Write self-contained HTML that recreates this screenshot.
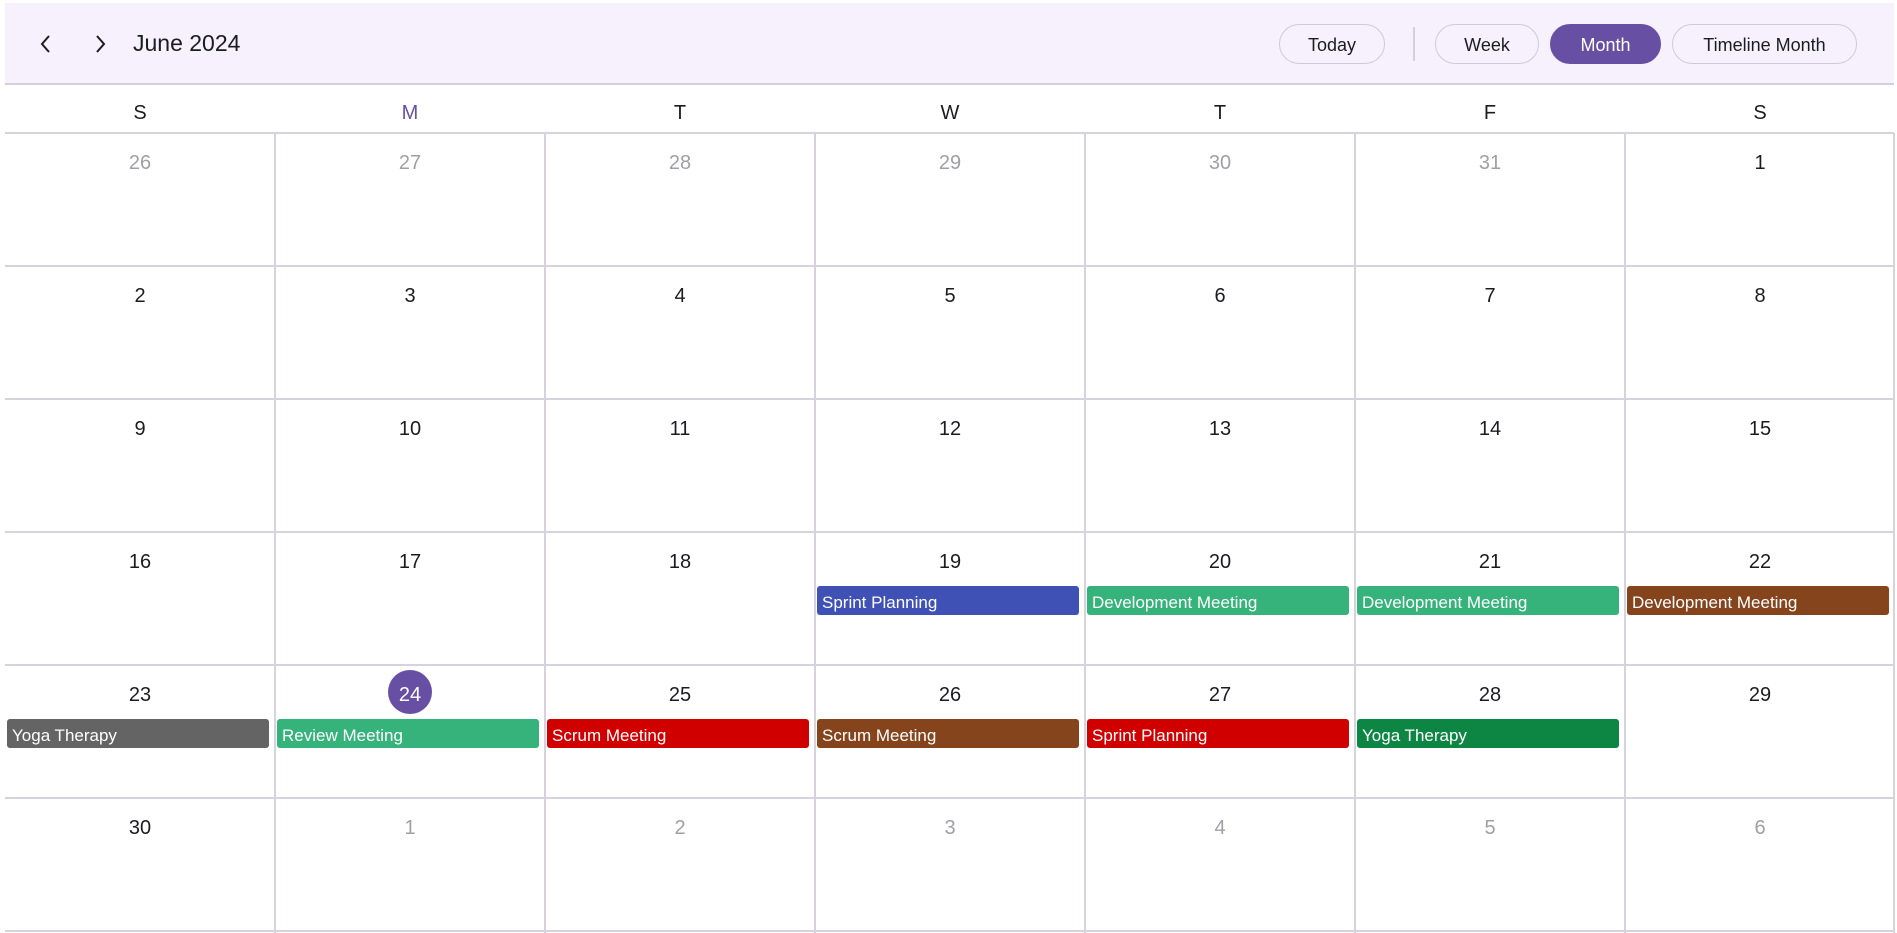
<!DOCTYPE html>
<html><head><meta charset="utf-8"><style>
*{box-sizing:border-box;margin:0;padding:0}
body{width:1897px;height:933px;background:#fff;font-family:"Liberation Sans",sans-serif;position:relative;overflow:hidden;color:#1c1b1f}
.hdr{position:absolute;left:5px;top:3px;width:1889px;height:82px;background:#f6f1fc;border-bottom:2px solid #d3d0da}
.t{position:absolute;white-space:nowrap}
.btn{position:absolute;top:24px;height:40px;border:1.5px solid #cfcad6;border-radius:20px;font-size:18px;display:flex;align-items:center;justify-content:center;color:#1c1b1f;padding-top:2px}
.dn{position:absolute;top:102px;width:270px;text-align:center;font-size:20px}
.hl{position:absolute;left:5px;width:1889px;height:2px;background:#d6d3de}
.vl{position:absolute;top:133px;width:2px;height:800px;background:#d6d3de}
.d{position:absolute;width:270px;text-align:center;font-size:20px;color:#1c1b1f;margin-top:3px}
.g{color:#a09ea6}
.ev{position:absolute;height:29px;border-radius:3px;color:#fff;font-size:17px;line-height:33px;padding-left:5px;white-space:nowrap;overflow:hidden}
</style></head><body>
<div class="hdr"></div>
<svg class="t" style="left:38px;top:33px" width="16" height="22" viewBox="0 0 16 22"><path d="M11 3 L4 11 L11 19" fill="none" stroke="#1c1b1f" stroke-width="2"/></svg>
<svg class="t" style="left:92px;top:33px" width="16" height="22" viewBox="0 0 16 22"><path d="M5 3 L12 11 L5 19" fill="none" stroke="#1c1b1f" stroke-width="2"/></svg>
<div class="t" style="left:133px;top:30px;font-size:23px">June 2024</div>
<div class="btn" style="left:1279px;width:106px">Today</div>
<div class="t" style="left:1413px;top:27px;width:2px;height:34px;background:#d3d0da"></div>
<div class="btn" style="left:1435px;width:104px">Week</div>
<div class="btn" style="left:1550px;width:111px;background:#6750a4;border-color:#6750a4;color:#fff">Month</div>
<div class="btn" style="left:1672px;width:185px">Timeline Month</div>

<div class="dn" style="left:5px">S</div>
<div class="dn" style="left:275px;color:#6750a4">M</div>
<div class="dn" style="left:545px">T</div>
<div class="dn" style="left:815px">W</div>
<div class="dn" style="left:1085px">T</div>
<div class="dn" style="left:1355px">F</div>
<div class="dn" style="left:1625px">S</div>

<div class="hl" style="top:132px"></div><div class="hl" style="top:265px"></div><div class="hl" style="top:398px"></div><div class="hl" style="top:531px"></div><div class="hl" style="top:664px"></div><div class="hl" style="top:797px"></div><div class="hl" style="top:930px"></div>
<div class="vl" style="left:274px"></div><div class="vl" style="left:544px"></div><div class="vl" style="left:814px"></div><div class="vl" style="left:1084px"></div><div class="vl" style="left:1354px"></div><div class="vl" style="left:1624px"></div><div class="vl" style="left:1893px"></div>

<div class="d g" style="left:5px;top:149px">26</div><div class="d g" style="left:275px;top:149px">27</div><div class="d g" style="left:545px;top:149px">28</div><div class="d g" style="left:815px;top:149px">29</div><div class="d g" style="left:1085px;top:149px">30</div><div class="d g" style="left:1355px;top:149px">31</div><div class="d" style="left:1625px;top:149px">1</div>
<div class="d" style="left:5px;top:282px">2</div><div class="d" style="left:275px;top:282px">3</div><div class="d" style="left:545px;top:282px">4</div><div class="d" style="left:815px;top:282px">5</div><div class="d" style="left:1085px;top:282px">6</div><div class="d" style="left:1355px;top:282px">7</div><div class="d" style="left:1625px;top:282px">8</div>
<div class="d" style="left:5px;top:415px">9</div><div class="d" style="left:275px;top:415px">10</div><div class="d" style="left:545px;top:415px">11</div><div class="d" style="left:815px;top:415px">12</div><div class="d" style="left:1085px;top:415px">13</div><div class="d" style="left:1355px;top:415px">14</div><div class="d" style="left:1625px;top:415px">15</div>
<div class="d" style="left:5px;top:548px">16</div><div class="d" style="left:275px;top:548px">17</div><div class="d" style="left:545px;top:548px">18</div><div class="d" style="left:815px;top:548px">19</div><div class="d" style="left:1085px;top:548px">20</div><div class="d" style="left:1355px;top:548px">21</div><div class="d" style="left:1625px;top:548px">22</div>
<div class="d" style="left:5px;top:681px">23</div>
<div class="t" style="left:388px;top:670px;width:44px;height:44px;border-radius:50%;background:#6750a4"></div>
<div class="d" style="left:275px;top:681px;color:#fff">24</div>
<div class="d" style="left:545px;top:681px">25</div><div class="d" style="left:815px;top:681px">26</div><div class="d" style="left:1085px;top:681px">27</div><div class="d" style="left:1355px;top:681px">28</div><div class="d" style="left:1625px;top:681px">29</div>
<div class="d" style="left:5px;top:814px">30</div><div class="d g" style="left:275px;top:814px">1</div><div class="d g" style="left:545px;top:814px">2</div><div class="d g" style="left:815px;top:814px">3</div><div class="d g" style="left:1085px;top:814px">4</div><div class="d g" style="left:1355px;top:814px">5</div><div class="d g" style="left:1625px;top:814px">6</div>

<div class="ev" style="left:817px;top:586px;width:262px;background:#3f51b5">Sprint Planning</div>
<div class="ev" style="left:1087px;top:586px;width:262px;background:#35b37b">Development Meeting</div>
<div class="ev" style="left:1357px;top:586px;width:262px;background:#35b37b">Development Meeting</div>
<div class="ev" style="left:1627px;top:586px;width:262px;background:#85441c">Development Meeting</div>
<div class="ev" style="left:7px;top:719px;width:262px;background:#646464">Yoga Therapy</div>
<div class="ev" style="left:277px;top:719px;width:262px;background:#35b37b">Review Meeting</div>
<div class="ev" style="left:547px;top:719px;width:262px;background:#d10000">Scrum Meeting</div>
<div class="ev" style="left:817px;top:719px;width:262px;background:#85441c">Scrum Meeting</div>
<div class="ev" style="left:1087px;top:719px;width:262px;background:#d10000">Sprint Planning</div>
<div class="ev" style="left:1357px;top:719px;width:262px;background:#0d8643">Yoga Therapy</div>
</body></html>
